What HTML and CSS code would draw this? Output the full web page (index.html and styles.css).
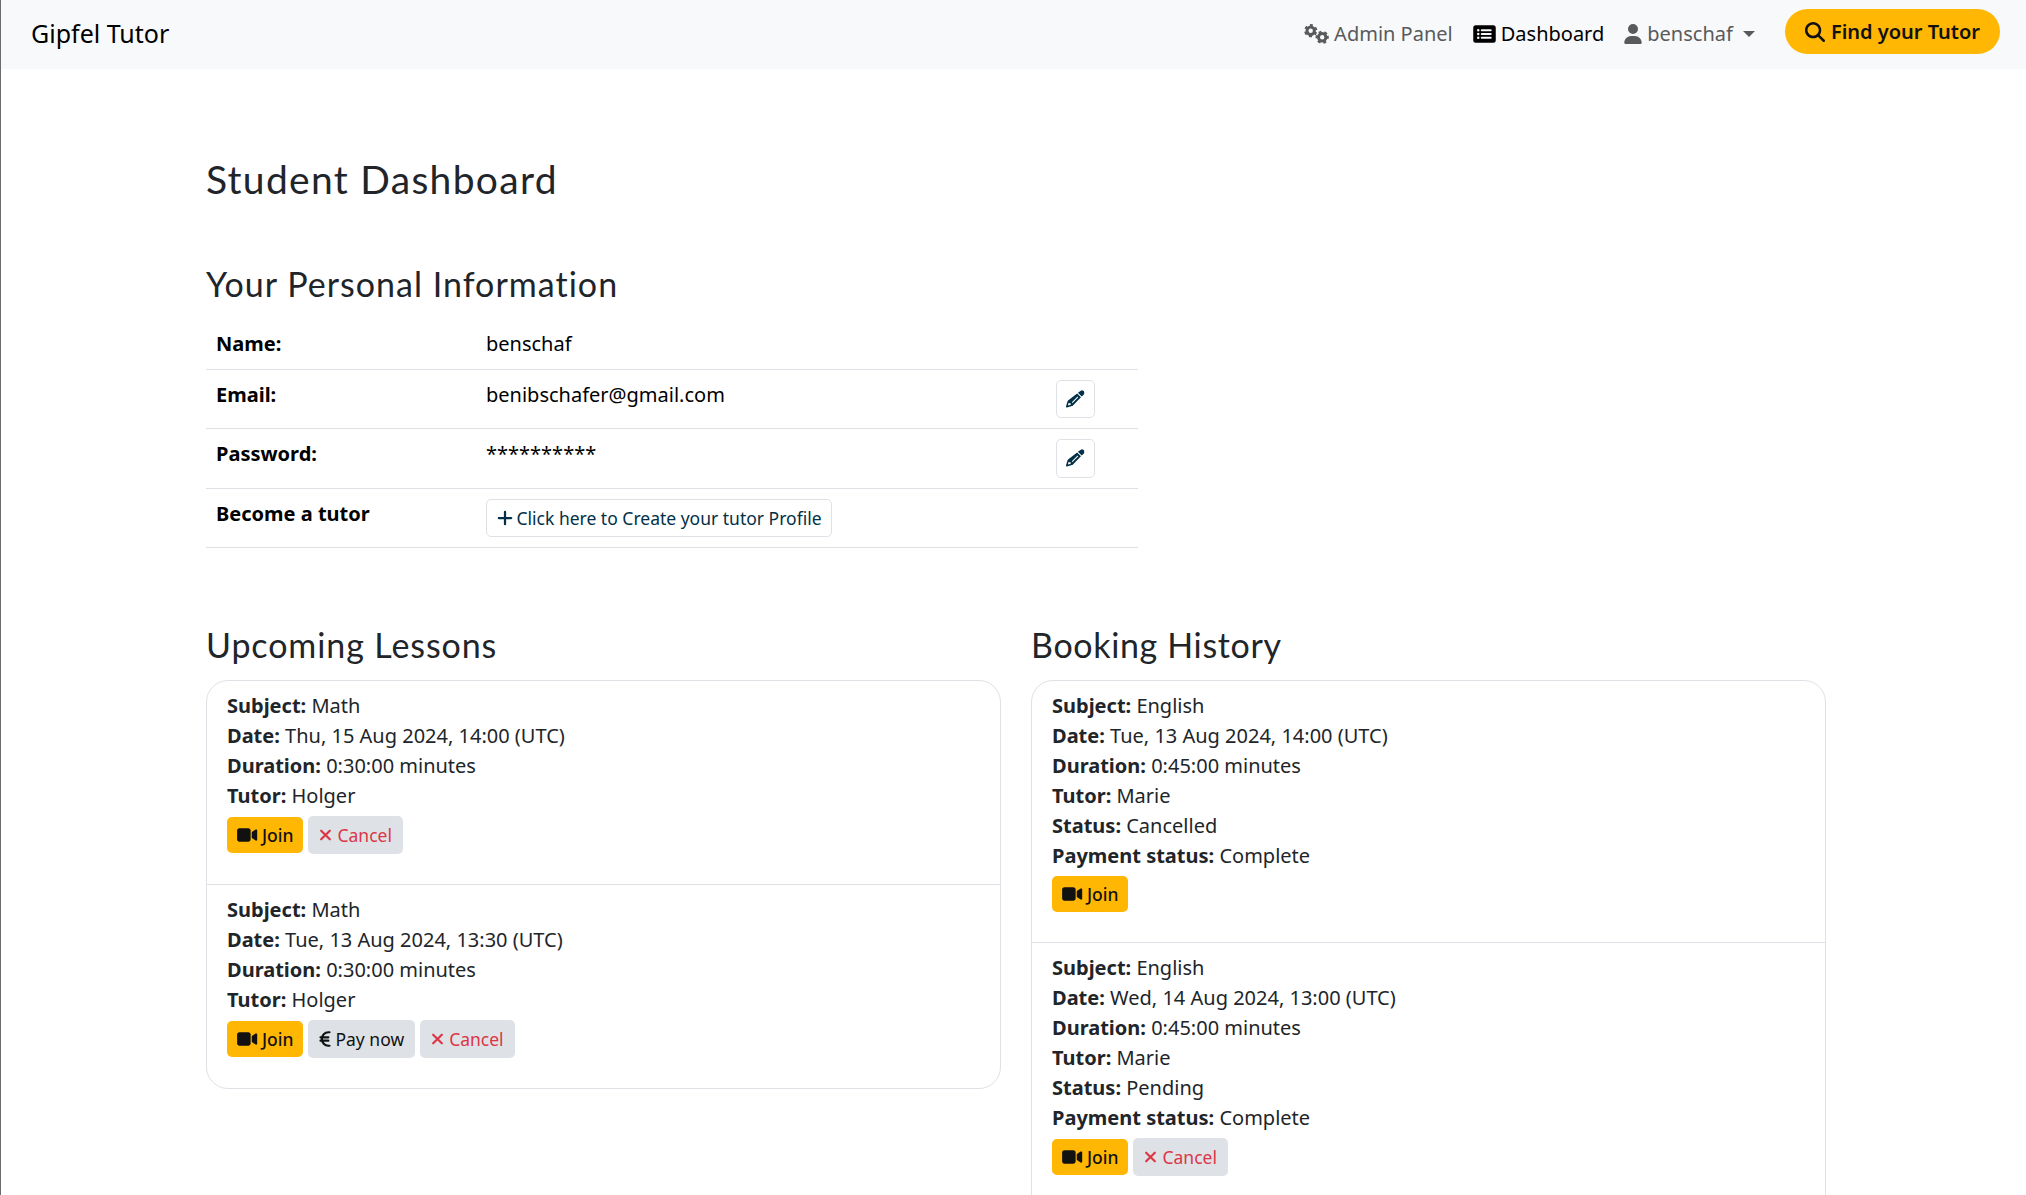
FILE: index.html
```html
<!DOCTYPE html>
<html lang="en">
<head>
<meta charset="utf-8">
<title>Gipfel Tutor</title>
<link rel="stylesheet" href="styles.css">
</head>
<body>
<svg class="sprite" aria-hidden="true">
  <symbol id="gears" viewBox="0 0 25 20">
    <g fill="none" stroke="currentColor">
      <circle cx="6.700" cy="6.700" r="3.700" stroke-width="3"/>
      <circle cx="6.700" cy="6.700" r="5.500" stroke-width="2.200" stroke-dasharray="2.900 2.860" transform="rotate(15 6.700 6.700)"/>
      <circle cx="18.200" cy="13.300" r="3.700" stroke-width="3"/>
      <circle cx="18.200" cy="13.300" r="5.500" stroke-width="2.200" stroke-dasharray="2.900 2.860" transform="rotate(-15 18.200 13.300)"/>
    </g>
  </symbol>
  <symbol id="list" viewBox="0 0 576 512"><path fill="currentColor" fill-rule="evenodd" d="M64 32h448a64 64 0 0 1 64 64v320a64 64 0 0 1-64 64H64a64 64 0 0 1-64-64V96a64 64 0 0 1 64-64zM128 128a32 32 0 1 0 0 64 32 32 0 0 0 0-64zm0 96a32 32 0 1 0 0 64 32 32 0 0 0 0-64zm0 96a32 32 0 1 0 0 64 32 32 0 0 0 0-64zM216 136a24 24 0 0 0 0 48h232a24 24 0 0 0 0-48zm0 96a24 24 0 0 0 0 48h232a24 24 0 0 0 0-48zm0 96a24 24 0 0 0 0 48h232a24 24 0 0 0 0-48z"/></symbol>
  <symbol id="user" viewBox="0 0 448 512"><path fill="currentColor" d="M224 256A128 128 0 1 0 224 0a128 128 0 1 0 0 256zm-45.700 48C79.800 304 0 383.800 0 482.300C0 498.700 13.300 512 29.700 512H418.300c16.400 0 29.700-13.300 29.700-29.700C448 383.800 368.200 304 269.700 304H178.300z"/></symbol>
  <symbol id="search" viewBox="0 0 512 512"><path fill="currentColor" d="M416 208c0 45.900-14.900 88.300-40 122.700L502.600 457.400c12.500 12.500 12.500 32.800 0 45.300s-32.800 12.500-45.300 0L330.700 376c-34.400 25.200-76.800 40-122.700 40C93.100 416 0 322.900 0 208S93.100 0 208 0S416 93.100 416 208zM208 352a144 144 0 1 0 0-288 144 144 0 1 0 0 288z"/></symbol>
  <symbol id="video" viewBox="0 0 576 512"><path fill="currentColor" d="M0 128C0 92.700 28.700 64 64 64H320c35.300 0 64 28.700 64 64V384c0 35.300-28.700 64-64 64H64c-35.300 0-64-28.700-64-64V128zM559.100 99.800c10.400 5.600 16.900 16.400 16.900 28.200V384c0 11.800-6.500 22.600-16.900 28.200s-23 5-32.900-1.600l-96-64L416 337.100V320 192 174.900l14.200-9.500 96-64c9.800-6.500 22.400-7.200 32.900-1.600z"/></symbol>
  <symbol id="xmark" viewBox="0 0 384 512"><path fill="none" stroke="currentColor" stroke-width="64" stroke-linecap="round" d="M64 128l256 256M320 128L64 384"/></symbol>
  <symbol id="plus" viewBox="0 0 448 512"><path fill="none" stroke="currentColor" stroke-width="64" stroke-linecap="round" d="M224 80v352M48 256h352"/></symbol>
  <symbol id="euro" viewBox="0 0 320 512"><path fill="none" stroke="currentColor" stroke-width="62" stroke-linecap="round" d="M288 64h-32C150 64 72 150 72 256s78 192 184 192h32M32 208h224M32 304h224"/></symbol>
  <symbol id="pencil" viewBox="0 0 512 512"><path fill="currentColor" fill-rule="evenodd" d="M410 18c19-19 49-19 68 0l16 16c24 24 24 66 0 90l-58 58L330 76zM308 98l106 106-222 222c-8 8-18 14-29 17L30 482c-8 2-17 0-23-6s-8-15-6-23l39-133c3-11 9-21 17-29zM72 352l-18 76 76-18v-42h-40zM312 190L168 334c-6 6-6 14 0 20s14 6 20 0l144-144c6-6 6-14 0-20s-14-6-20 0z"/></symbol>
</svg>
<nav class="navbar">
  <a class="brand">Gipfel Tutor</a>
  <div class="nav-links">
    <a class="nav-link"><svg class="icon gears"><use href="#gears"/></svg>Admin Panel</a>
    <a class="nav-link active"><svg class="icon list"><use href="#list"/></svg>Dashboard</a>
    <a class="nav-link"><svg class="icon user"><use href="#user"/></svg>benschaf<span class="caret"></span></a>
    <a class="find"><svg class="icon search"><use href="#search"/></svg>Find your Tutor</a>
  </div>
</nav>
<main class="container">
  <h1>Student Dashboard</h1>
  <section class="personal">
    <h2 class="t-info">Your Personal Information</h2>
    <table class="info">
      <tr><th>Name:</th><td>benschaf</td><td></td></tr>
      <tr><th>Email:</th><td>benibschafer@gmail.com</td><td><button class="btn edit"><svg class="icon pencil"><use href="#pencil"/></svg></button></td></tr>
      <tr><th>Password:</th><td>**********</td><td><button class="btn edit tall"><svg class="icon pencil"><use href="#pencil"/></svg></button></td></tr>
      <tr><th>Become a tutor</th><td><button class="btn create"><svg class="icon plus"><use href="#plus"/></svg>Click here to Create your tutor Profile</button></td><td></td></tr>
    </table>
  </section>
  <div class="columns">
    <section>
      <h2 class="t-up">Upcoming Lessons</h2>
      <ul class="list-group">
        <li>
          <p><b>Subject:</b> Math</p><p><b>Date:</b> Thu, 15 Aug 2024, 14:00 (UTC)</p><p><b>Duration:</b> 0:30:00 minutes</p><p><b>Tutor:</b> Holger</p>
          <div class="actions"><button class="btn join"><svg class="icon video"><use href="#video"/></svg>Join</button><button class="btn gray cancel"><svg class="icon xmark"><use href="#xmark"/></svg>Cancel</button></div>
        </li>
        <li>
          <p><b>Subject:</b> Math</p><p><b>Date:</b> Tue, 13 Aug 2024, 13:30 (UTC)</p><p><b>Duration:</b> 0:30:00 minutes</p><p><b>Tutor:</b> Holger</p>
          <div class="actions"><button class="btn join"><svg class="icon video"><use href="#video"/></svg>Join</button><button class="btn gray"><svg class="icon euro"><use href="#euro"/></svg>Pay now</button><button class="btn gray cancel"><svg class="icon xmark"><use href="#xmark"/></svg>Cancel</button></div>
        </li>
      </ul>
    </section>
    <section>
      <h2 class="t-hist">Booking History</h2>
      <ul class="list-group history">
        <li>
          <p><b>Subject:</b> English</p><p><b>Date:</b> Tue, 13 Aug 2024, 14:00 (UTC)</p><p><b>Duration:</b> 0:45:00 minutes</p><p><b>Tutor:</b> Marie</p><p><b>Status:</b> Cancelled</p><p><b>Payment status:</b> Complete</p>
          <div class="actions"><button class="btn join"><svg class="icon video"><use href="#video"/></svg>Join</button></div>
        </li>
        <li>
          <p><b>Subject:</b> English</p><p><b>Date:</b> Wed, 14 Aug 2024, 13:00 (UTC)</p><p><b>Duration:</b> 0:45:00 minutes</p><p><b>Tutor:</b> Marie</p><p><b>Status:</b> Pending</p><p><b>Payment status:</b> Complete</p>
          <div class="actions"><button class="btn join"><svg class="icon video"><use href="#video"/></svg>Join</button><button class="btn gray cancel"><svg class="icon xmark"><use href="#xmark"/></svg>Cancel</button></div>
        </li>
      </ul>
    </section>
  </div>
</main>
</body>
</html>
```
FILE: styles.css
```css
* { box-sizing: border-box; }
html { height: 100%; overflow: hidden; }
body {
  margin: 0;
  height: 100%;
  overflow: hidden;
  border-left: 1px solid #6b6b6f;
  background: #fff;
  color: #212529;
  font: 20px/30px "Noto Sans", sans-serif;
}
.sprite { display: none; }
.icon { flex: none; display: block; }

.navbar {
  display: flex;
  justify-content: space-between;
  height: 69px;
  padding: 0 26px 0 30px;
  background: #f8f9fa;
}
.brand { color: #000; font-size: 25px; line-height: 67px; }
.nav-links { display: flex; align-items: flex-start; }
.nav-link {
  display: flex;
  align-items: center;
  height: 68px;
  margin-right: 20px;
  color: #595a5b;
  white-space: nowrap;
}
.nav-link.active { color: #000; }
.gears { width: 25px; height: 20px; margin-right: 5px; }
.list { width: 23px; height: 20px; margin-right: 5px; }
.user { width: 18px; height: 20px; margin-right: 5px; }
.caret {
  margin-left: 10px;
  border: 6px solid transparent;
  border-top-color: currentColor;
  border-bottom: 0;
}
.find {
  display: flex;
  align-items: center;
  height: 45px;
  margin: 9px 0 0 10px;
  padding: 0 20px;
  border-radius: 23px;
  background: #ffb703;
  color: #111;
  font-weight: 600;
  white-space: nowrap;
}
.search { width: 20px; height: 20px; margin-right: 6px; }

.container { width: 1620px; margin-left: 205px; padding-top: 86px; }
h1, h2 { margin: 0; font-family: Lato, sans-serif; font-weight: 400; white-space: nowrap; }
h1 { font-size: 39px; line-height: 48px; letter-spacing: 1.3px; }
h2 { font-size: 34px; line-height: 42px; }
.t-info { letter-spacing: 1.02px; }
.t-up { letter-spacing: 0.9px; }
.t-hist { letter-spacing: 0.65px; }
.personal { padding-top: 60px; }

.info {
  width: 932px;
  margin-top: 14px;
  table-layout: fixed;
  border-collapse: separate;
  border-spacing: 0;
  color: #000;
}
.info th, .info td {
  padding: 10px;
  border-bottom: 1px solid #dee2e6;
  vertical-align: top;
  text-align: left;
}
.info th { width: 270px; font-weight: 700; }
.info td:last-child { width: 92px; }

.btn {
  display: flex;
  align-items: center;
  height: 38px;
  padding: 0 10px;
  border: 0;
  border-radius: 5px;
  font: 17.5px/26px "Noto Sans", sans-serif;
  white-space: nowrap;
}
.edit, .create { border: 1px solid #dee2e6; background: #fff; color: #023047; }
.create { padding: 0 9.5px; }
.edit { width: 39px; justify-content: center; padding: 0; }
.edit.tall { height: 39px; }
.pencil { width: 18.5px; height: 18.5px; }
.plus { width: 16px; height: 18px; margin-right: 4px; }

.columns {
  display: grid;
  grid-template-columns: 795px 795px;
  gap: 30px;
  align-items: start;
  margin-top: 76px;
}
.list-group {
  margin: 14px 0 0;
  padding: 0;
  list-style: none;
  border: 1px solid #dee2e6;
  border-radius: 22px;
}
.list-group.history { padding-bottom: 60px; }
.list-group li { padding: 10px 20px 30px; }
.list-group li + li { border-top: 1px solid #dee2e6; }
.list-group p { margin: 0; }
.actions { display: flex; align-items: center; gap: 5px; margin-top: 5px; }
.join { height: 36px; background: #ffb703; color: #111; font-weight: 500; }
.gray { padding: 0 11px; background: #dee2e6; color: #111; }
.gray.cancel { color: #dc3545; }
.video { width: 20.5px; height: 18px; margin-right: 4.5px; }
.xmark { width: 13px; height: 18px; margin-right: 5px; }
.euro { width: 12px; height: 18px; margin-right: 4px; }
```
